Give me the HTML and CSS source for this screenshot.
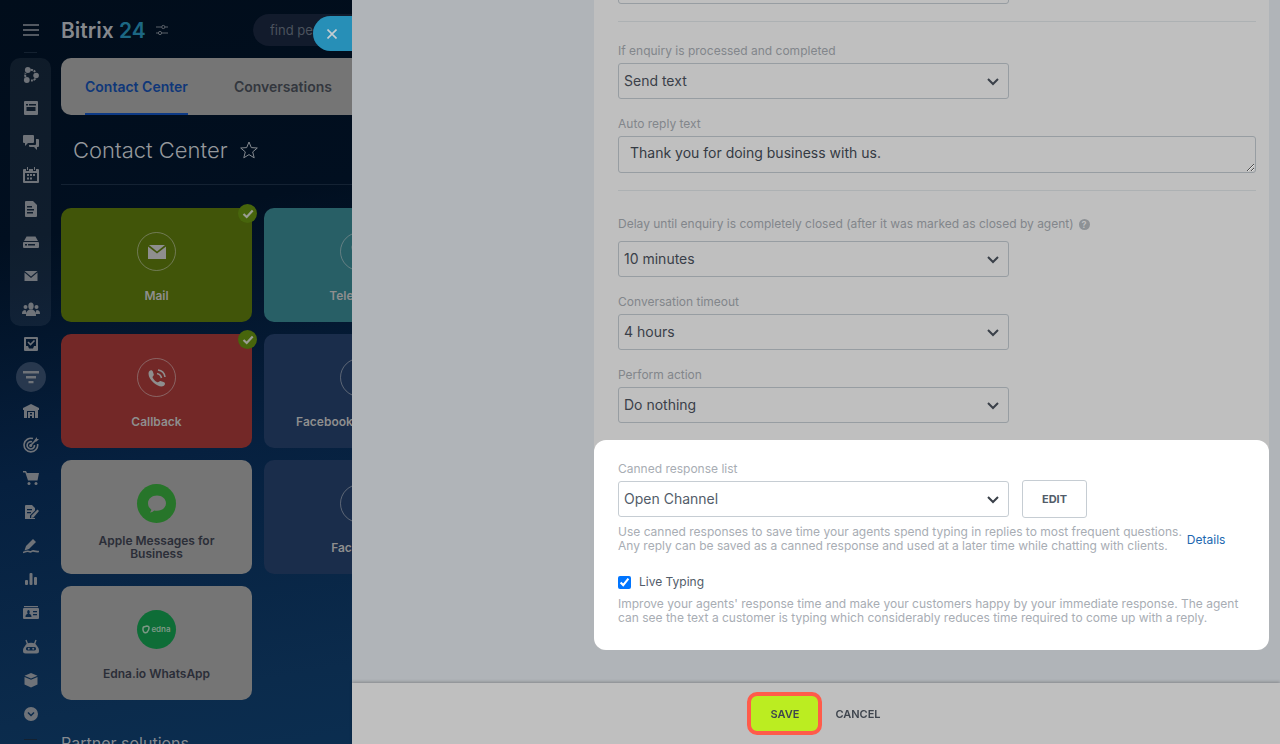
FILE: index.html
```html
<!DOCTYPE html>
<html lang="en">
<head>
    <meta charset="UTF-8">
    <meta name="viewport" content="width=device-width, initial-scale=1.0">
    <title>Contact Center</title>
    <link rel="stylesheet" href="styles.css">
</head>
<body>
    <div class="app">
        <nav class="sidebar" aria-label="Main menu">
            <button class="menu-toggle" aria-label="Menu">
                <svg width="16" height="14" viewBox="0 0 16 14"><path d="M0 2h16M0 7h16M0 12h16" stroke="currentColor" stroke-width="1.6"/></svg>
            </button>
            <div class="sidebar-line"></div>
            <div class="menu-group">
                <a href="#" aria-label="CoPilot"><svg viewBox="0 0 16 16"><path d="M7.500 2.800c2 0 3.500.600 4.700 2M12.500 11.500c-1 1.300-2.500 2-4.500 2M2.600 10c-.600-1.300-.600-2.700 0-4" fill="none" stroke="currentColor" stroke-width="2" stroke-dasharray="2.500 .800"/><circle cx="4.800" cy="3" r="2.900"/><circle cx="13.100" cy="8.500" r="2.800"/><circle cx="3.800" cy="13" r="2.900"/></svg></a>
                <a href="#" aria-label="Feed"><svg viewBox="0 0 16 16"><path fill-rule="evenodd" d="M2 1h12a1 1 0 0 1 1 1v12a1 1 0 0 1-1 1H2a1 1 0 0 1-1-1V2a1 1 0 0 1 1-1zm1 3v1.500h2V4zm3 0v1.500h7V4zM3.500 7v4h9V7z"/></svg></a>
                <a href="#" aria-label="Messenger"><svg viewBox="0 0 16 16"><path d="M1 1h9a1 1 0 0 1 1 1v6a1 1 0 0 1-1 1H5l-3 3V9H1a1 1 0 0 1-1-1V2a1 1 0 0 1 1-1z"/><path d="M13 5h2a1 1 0 0 1 1 1v6a1 1 0 0 1-1 1h-1v3l-3-3H7a1 1 0 0 1-1-1v-1h6a1 1 0 0 0 1-1z"/></svg></a>
                <a href="#" aria-label="Calendar"><svg viewBox="0 0 16 16"><path fill-rule="evenodd" d="M1 2h2v2h3V2h4v2h3V2h2a1 1 0 0 1 1 1v12a1 1 0 0 1-1 1H1a1 1 0 0 1-1-1V3a1 1 0 0 1 1-1zm1 4v8h12V6z"/><path d="M4 0h1v3H4zM11 0h1v3h-1zM4 7h2v2H4zM7 7h2v2H7zM10 7h2v2h-2zM4 10.500h2v2H4zM7 10.500h2v2H7z"/></svg></a>
                <a href="#" aria-label="Documents"><svg viewBox="0 0 16 16"><path fill-rule="evenodd" d="M3 0h7l4 4v11a1 1 0 0 1-1 1H3a1 1 0 0 1-1-1V1a1 1 0 0 1 1-1zm1 5v1.500h5V5zm0 3v1.500h7V8zm0 3v1.500h6V11z"/></svg></a>
                <a href="#" aria-label="Drive"><svg viewBox="0 0 16 16"><path d="M3.500 2.500h9L15 7H1z"/><path fill-rule="evenodd" d="M1 8h14a1 1 0 0 1 1 1v4a1 1 0 0 1-1 1H1a1 1 0 0 1-1-1V9a1 1 0 0 1 1-1zm1 2v1.500h2V10zm3 0v1.500h7V10z"/></svg></a>
                <a href="#" aria-label="Webmail"><svg viewBox="0 0 16 16"><path d="M1.500 3h13L8 8.500z"/><path d="M1.500 4.500L8 10l6.500-5.500V13h-13z"/></svg></a>
                <a href="#" aria-label="Workgroups"><svg class="wide" viewBox="0 0 18 16"><circle cx="3.500" cy="6" r="2"/><circle cx="14.500" cy="6" r="2"/><path d="M0 13c0-3 1-4 3.500-4l1.500 4zM18 13c0-3-1-4-3.500-4L13 13z"/><ellipse cx="9" cy="5" rx="2.700" ry="3.500"/><path d="M4 15c0-4 1-5.500 3.500-6.500h3C13 9.500 14 11 14 15z"/></svg></a>
            </div>
            <div class="menu-list">
                <a href="#" aria-label="Tasks"><svg viewBox="0 0 16 16"><path fill-rule="evenodd" d="M2 1h12a1 1 0 0 1 1 1v12a1 1 0 0 1-1 1H2a1 1 0 0 1-1-1V2a1 1 0 0 1 1-1zm1 2v7h2l1 2.500h4l1-2.500h2V3z"/><path d="M5 6l2.500 2.500L11.500 4.500" fill="none" stroke="currentColor" stroke-width="1.600"/></svg></a>
                <a href="#" class="active" aria-label="CRM"><svg viewBox="0 0 16 16"><path d="M0 2h16v2.500H0zM3 7h10v2.500H3zM5.500 12h5v2.200h-5z"/></svg></a>
                <a href="#" aria-label="Inventory"><svg viewBox="0 0 16 16"><path fill-rule="evenodd" d="M8 1l8 4v2h-1v8h-3V8H4v7H1V7H0V5z"/><path fill-rule="evenodd" d="M5 9h6v6H9v-2H7v2H5zm2 1v1.500h2V10z"/></svg></a>
                <a href="#" aria-label="Marketing"><svg viewBox="0 0 16 16"><g fill="none" stroke="currentColor" stroke-width="1.600"><path d="M10 1.600A6.800 6.800 0 1 0 14.600 7"/><path d="M9 4.800A3.700 3.700 0 1 0 11.500 8"/><path d="M7.500 8.500L14 2"/></g><circle cx="7.700" cy="8.500" r="1.500"/><path d="M11.500 3L14 0v2h2l-2.500 2.500h-2z"/></svg></a>
                <a href="#" aria-label="Sites and stores"><svg viewBox="0 0 16 16"><path d="M0 1h3l1 2h12l-1.500 7.500H5L2.300 2.500H0z"/><circle cx="6" cy="13.500" r="1.500"/><circle cx="13" cy="13.500" r="1.500"/></svg></a>
                <a href="#" aria-label="Contracts"><svg viewBox="0 0 16 16"><path fill-rule="evenodd" d="M3 1h6l3 3v2.500l-5 5V14h5v1H2V2a1 1 0 0 1 1-1zm1 4v1.300h5V5zm0 3v1.300h4V8z"/><path d="M14.500 5.500l1.500 1.500-5.500 6.500-2.500.500.500-2.500z"/></svg></a>
                <a href="#" aria-label="e-Signature"><svg viewBox="0 0 16 16"><path d="M10 1l3 3-7 7-4.500 1.500L3 8z"/><path d="M0 14.500c4-1 4-2 6-1s2 0 3.500-.500 2 1 6.500.500" fill="none" stroke="currentColor" stroke-width="1.600"/></svg></a>
                <a href="#" aria-label="Analytics"><svg viewBox="0 0 16 16"><rect x="2" y="9" width="3" height="5" rx="1"/><rect x="6.500" y="2" width="3" height="12" rx="1"/><rect x="11" y="6" width="3" height="8" rx="1"/></svg></a>
                <a href="#" aria-label="Employees"><svg viewBox="0 0 16 16"><path d="M1 1h14v1.200H1z"/><path fill-rule="evenodd" d="M1 3h14a1 1 0 0 1 1 1v9a1 1 0 0 1-1 1H1a1 1 0 0 1-1-1V4a1 1 0 0 1 1-1zm4.500 2C4 5 4 8 4.800 8.700 3 9.500 2.500 10 2.500 12h6c0-2-.500-2.500-2.300-3.300C7 8 7 5 5.500 5zM10 6v1.200h4V6zm0 3v1.200h4V9z"/></svg></a>
                <a href="#" aria-label="RPA"><svg viewBox="0 0 16 16"><path d="M3 1l1.500 4M13 1l-1.500 4" stroke="currentColor" stroke-width="1.400"/><path fill-rule="evenodd" d="M2 7c1-4.500 11-4.500 12 0 1.500 1.500 2 3 2 5a2.500 2.500 0 0 1-2.500 2.500h-11A2.500 2.500 0 0 1 0 12c0-2 .500-3.500 2-5zm2.500 1c-2 0-2 3.500 0 3.500h7c2 0 2-3.500 0-3.500z"/><circle cx="5.800" cy="9.700" r="1"/><circle cx="10.200" cy="9.700" r="1"/></svg></a>
                <a href="#" aria-label="Market"><svg viewBox="0 0 16 16"><path d="M8 1l6.500 2.700L8 6.500 1.500 3.700z"/><path d="M1.500 5L8 7.800 14.500 5v7.500L8 15.500l-6.500-3z"/></svg></a>
                <a href="#" aria-label="More"><svg viewBox="0 0 16 16"><path fill-rule="evenodd" d="M8 1a7 7 0 1 1 0 14A7 7 0 0 1 8 1zM5.500 6l-1 1L8 10.500 11.500 7l-1-1L8 8.500z"/></svg></a>
            </div>
            <div class="sidebar-line"></div>
        </nav>

        <main class="workspace">
            <header class="header">
                <div class="logo">Bitrix <span>24</span></div>
                <svg class="settings" width="12" height="12" viewBox="0 0 12 12"><g fill="none" stroke="currentColor"><path d="M0 3h5.500M9 3h3M0 9h2M6 9h6"/><circle cx="7.300" cy="3" r="1.600"/><circle cx="4" cy="9" r="1.600"/></g></svg>
                <input class="search" type="text" placeholder="find people, documents, and more" aria-label="Search">
            </header>

            <div class="tabs">
                <a href="#" class="tab active">Contact Center</a>
                <a href="#" class="tab">Conversations</a>
            </div>

            <div class="page-title">
                <h1>Contact Center</h1>
                <svg width="18" height="18" viewBox="0 0 18 18"><path d="M9 1l2.300 5.600 6 .400-4.600 3.900 1.500 5.900L9 13.600l-5.200 3.200 1.500-5.900L.700 7l6-.400z" fill="none" stroke="currentColor"/></svg>
            </div>

            <div class="channels">
                <a href="#" class="channel mail">
                    <span class="icon ring"><svg width="18" height="14" viewBox="0 0 18 14"><path d="M1 0h16L9 6.500z"/><path d="M0 1.500l9 7 9-7V14H0z"/></svg></span>
                    <span class="name">Mail</span>
                    <span class="badge"><svg width="12" height="10" viewBox="0 0 12 10"><path d="M1.500 5l3.200 3 6-6.500" fill="none" stroke="currentColor" stroke-width="2.200"/></svg></span>
                </a>
                <a href="#" class="channel telephony">
                    <span class="icon ring"><svg width="18" height="18" viewBox="0 0 18 18"><path d="M1 2c2-2 4-1 4 1l1 3-2 2c1 3 3 5 6 6l2-2 4 2c1 2-1 4-3 4C6 17-1 9 1 2z"/></svg></span>
                    <span class="name">Telephony</span>
                </a>
                <a href="#" class="channel callback">
                    <span class="icon ring"><svg width="18" height="18" viewBox="0 0 18 18"><path d="M1 2.500C2.500.500 4.500 1 5 3l.800 2.500c.200 1-1.500 2-1.300 2.800.800 2.200 2.800 4.200 5 5 1 .400 2-1.500 3-1.200l3 1c2 .700 2 2.500 0 4C10 19.500-2 9 1 2.500z"/><path d="M9 4.500c2.500.500 4 2 4.500 4.500M10 1c4 .500 6.500 3.500 7 7" fill="none" stroke="currentColor" stroke-width="1.600"/></svg></span>
                    <span class="name">Callback</span>
                    <span class="badge"><svg width="12" height="10" viewBox="0 0 12 10"><path d="M1.500 5l3.200 3 6-6.500" fill="none" stroke="currentColor" stroke-width="2.200"/></svg></span>
                </a>
                <a href="#" class="channel facebook">
                    <span class="icon ring"><svg width="18" height="18" viewBox="0 0 18 18"><path d="M1 0h16v18h-5v-7h3V8h-3V5h2V3H9v8H7v7H1z"/></svg></span>
                    <span class="name">Facebook Forms CRM</span>
                </a>
                <a href="#" class="channel">
                    <span class="icon apple"><svg width="20" height="20" viewBox="0 0 20 20"><path d="M10 1.500c5 0 9 3.300 9 7.700s-4 7.600-9 7.600c-.900 0-1.800-.100-2.700-.300-1.300 1.300-2.800 1.900-4.500 1.900 1-.800 1.500-1.700 1.500-2.900C2.300 14.100 1 11.900 1 9.200c0-4.400 4-7.700 9-7.700z"/></svg></span>
                    <span class="name">Apple Messages for Business</span>
                </a>
                <a href="#" class="channel facebook">
                    <span class="icon ring"></span>
                    <span class="name">Facebook</span>
                </a>
                <a href="#" class="channel">
                    <span class="icon edna"><svg width="8" height="9" viewBox="0 0 8 9"><path d="M1.500 2L5 1c2 0 2.500 1.500 1.500 4S4 8 2.500 7.500.500 3.500 1.500 2z" fill="none" stroke="currentColor" stroke-width="1.500"/></svg>edna</span>
                    <span class="name">Edna.io WhatsApp</span>
                </a>
            </div>

            <h2>Partner solutions</h2>
        </main>
    </div>

    <div class="slider">
        <button class="slider-close" aria-label="Close">
            <svg width="10" height="10" viewBox="0 0 10 10"><path d="M.500.500l9 9M9.500.500l-9 9" stroke="currentColor" stroke-width="1.600"/></svg>
        </button>

        <div class="slider-body">
            <form class="form" id="channel-form">
                <div class="section">
                    <div class="select">
                        <select aria-label="Closing option"><option></option></select>
                    </div>
                    <hr>
                    <div class="field">
                        <label for="processed">If enquiry is processed and completed</label>
                        <div class="select">
                            <select id="processed"><option>Send text</option></select>
                            <svg width="12" height="8" viewBox="0 0 12 8"><path d="M1 1l5 5 5-5"/></svg>
                        </div>
                    </div>
                    <div class="field">
                        <label for="reply">Auto reply text</label>
                        <textarea id="reply" rows="1">Thank you for doing business with us.</textarea>
                    </div>
                    <hr>
                    <div class="field">
                        <div class="label-row">
                            <label for="delay">Delay until enquiry is completely closed (after it was marked as closed by agent)</label>
                            <span class="hint">?</span>
                        </div>
                        <div class="select">
                            <select id="delay"><option>10 minutes</option></select>
                            <svg width="12" height="8" viewBox="0 0 12 8"><path d="M1 1l5 5 5-5"/></svg>
                        </div>
                    </div>
                    <div class="field">
                        <label for="timeout">Conversation timeout</label>
                        <div class="select">
                            <select id="timeout"><option>4 hours</option></select>
                            <svg width="12" height="8" viewBox="0 0 12 8"><path d="M1 1l5 5 5-5"/></svg>
                        </div>
                    </div>
                    <div class="field">
                        <label for="action">Perform action</label>
                        <div class="select">
                            <select id="action"><option>Do nothing</option></select>
                            <svg width="12" height="8" viewBox="0 0 12 8"><path d="M1 1l5 5 5-5"/></svg>
                        </div>
                    </div>
                </div>

                <div class="section highlight">
                    <label for="canned">Canned response list</label>
                    <div class="select-row">
                        <div class="select">
                            <select id="canned"><option>Open Channel</option></select>
                            <svg width="12" height="8" viewBox="0 0 12 8"><path d="M1 1l5 5 5-5"/></svg>
                        </div>
                        <button type="button" class="edit">Edit</button>
                    </div>
                    <div class="help-row">
                        <p class="help">Use canned responses to save time your agents spend typing in replies to most frequent questions.<br>Any reply can be saved as a canned response and used at a later time while chatting with clients.</p>
                        <a href="#">Details</a>
                    </div>
                    <div class="check">
                        <input type="checkbox" id="live" checked>
                        <label for="live">Live Typing</label>
                    </div>
                    <p class="help">Improve your agents' response time and make your customers happy by your immediate response. The agent<br>can see the text a customer is typing which considerably reduces time required to come up with a reply.</p>
                </div>
            </form>
        </div>

        <footer class="footer">
            <button type="submit" form="channel-form" class="save">Save</button>
            <button type="button" class="cancel">Cancel</button>
        </footer>
    </div>
</body>
</html>
```
FILE: styles.css
```css
* {
    box-sizing: border-box;
}

body {
    margin: 0;
    height: 100vh;
    overflow: hidden;
    font-family: Inter, "Liberation Sans", sans-serif;
    font-size: 12px;
    color: #3a4049;
    background: linear-gradient(170deg, #010d1b 0%, #010f20 25%, #06203f 50%, #0b2b4c 75%, #0b3257 100%);
}

a {
    text-decoration: none;
    color: inherit;
}

button,
input,
select,
textarea {
    font-family: inherit;
}

svg {
    display: block;
    fill: currentColor;
}

.app {
    display: flex;
    height: 100vh;
    overflow: hidden;
}

/* left menu */
.sidebar {
    display: flex;
    flex-direction: column;
    align-items: center;
    width: 61px;
    flex-shrink: 0;
    color: #6f7379;
}

.menu-toggle {
    height: 52px;
    padding: 8px 0 0;
    border: none;
    background: none;
    color: #6f7379;
}

.sidebar-line {
    width: 13px;
    height: 1px;
    flex-shrink: 0;
    background-color: #142130;
}

.menu-group,
.menu-list {
    display: flex;
    flex-direction: column;
    align-items: center;
    justify-content: space-around;
    flex-shrink: 0;
}

.menu-group {
    width: 41px;
    height: 268px;
    margin-top: 5px;
    border-radius: 10px;
    background-color: rgba(255, 255, 255, 0.06);
}

.menu-list {
    height: 404px;
    margin: 1px 0 8px;
}

.sidebar a svg {
    width: 16px;
    height: 16px;
}

.sidebar a .wide {
    width: 18px;
}

.menu-list .active {
    margin: -7px 0;
    padding: 7px;
    border-radius: 50%;
    background-color: #28384e;
}

/* page under the slider */
.workspace {
    width: 394px;
    flex-shrink: 0;
    color: #858a90;
}

.header {
    display: flex;
    align-items: center;
    height: 58px;
    padding-top: 2px;
}

.logo {
    font-size: 21px;
    font-weight: 600;
    color: #85888c;
}

.logo span {
    color: #1c6783;
}

.settings {
    margin: 0 auto 0 10px;
    color: #5d636b;
}

.search {
    width: 202px;
    height: 32px;
    padding: 0 17px;
    border: none;
    border-radius: 16px;
    background-color: #121b2c;
    font-size: 13px;
}

.search::placeholder {
    color: #4b525d;
}

.tabs {
    display: flex;
    gap: 46px;
    height: 57px;
    padding: 0 24px;
    border-radius: 10px;
    background-color: #757575;
    font-size: 14px;
    font-weight: 600;
    line-height: 57px;
    color: #33373e;
}

.tab.active {
    color: #0f3779;
    border-bottom: 2px solid #0d3a86;
}

.page-title {
    display: flex;
    align-items: center;
    gap: 12px;
    height: 70px;
    padding-left: 12px;
    border-bottom: 1px solid #142233;
}

h1 {
    margin: 0;
    font-size: 22px;
    font-weight: 300;
    color: #95989c;
}

.channels {
    display: grid;
    grid-template-columns: 191px 191px;
    grid-auto-rows: 114px;
    gap: 12px;
    margin: 23px 0 33px;
}

.channel {
    position: relative;
    display: flex;
    flex-direction: column;
    align-items: center;
    gap: 11px;
    padding: 24px 20px 0;
    border-radius: 10px;
    background-color: #757575;
    color: #2b2e38;
    font-weight: 600;
    line-height: 13px;
    text-align: center;
}

.mail {
    background-color: #415509;
    color: #8e8e8e;
}

.telephony {
    background-color: #285f66;
    color: #8e8e8e;
}

.callback {
    background-color: #732827;
    color: #8e8e8e;
}

.facebook {
    background-color: #1a2d4b;
    color: #8e8e8e;
}

.channel .icon {
    display: flex;
    align-items: center;
    justify-content: center;
    width: 39px;
    height: 39px;
    border-radius: 50%;
}

.channel .ring {
    border: 1px solid rgba(160, 160, 160, 0.5);
}

.channel .name {
    display: flex;
    align-items: center;
    min-height: 26px;
}

.apple {
    background-color: #27752a;
    color: #757575;
}

.edna {
    gap: 1px;
    background-color: #0e6d37;
    color: #7d9886;
    font-size: 8px;
}

.badge {
    position: absolute;
    top: -4px;
    right: -5px;
    display: flex;
    align-items: center;
    justify-content: center;
    width: 19px;
    height: 19px;
    border-radius: 50%;
    background-color: #47650c;
    color: #9a9e94;
}

h2 {
    margin: 0;
    font-size: 16px;
    font-weight: 400;
    line-height: 20px;
}

/* slider */
.slider {
    position: fixed;
    top: 0;
    right: 0;
    bottom: 0;
    left: 352px;
    display: flex;
    flex-direction: column;
    background-color: #b0b4b8;
}

.slider-close {
    position: absolute;
    top: 16px;
    right: 100%;
    display: flex;
    align-items: center;
    width: 39px;
    height: 35px;
    padding: 0 0 0 14px;
    border: none;
    border-radius: 18px 0 0 18px;
    background-color: #278fb7;
    color: #c5cdd1;
}

.slider-body {
    display: flex;
    flex: 1;
    flex-direction: column;
    justify-content: flex-end;
    min-height: 0;
    overflow: hidden;
    padding: 0 11px 33px 242px;
}

.form {
    background-color: #bfbfbf;
    border-radius: 12px;
}

.section {
    padding: 0 13px 17px 24px;
}

.field + .field {
    margin-top: 17px;
}

label {
    display: block;
    margin-bottom: 4px;
    line-height: 16px;
    color: #82868b;
}

.label-row {
    display: flex;
    align-items: center;
    gap: 5px;
    height: 24px;
    margin-bottom: 5px;
}

.label-row label {
    margin: 0;
}

.hint {
    width: 11px;
    height: 11px;
    border-radius: 50%;
    background-color: #8d9195;
    color: #bfbfbf;
    font-size: 9px;
    font-weight: 700;
    line-height: 11px;
    text-align: center;
}

.select {
    position: relative;
    width: 391px;
}

.select select {
    display: block;
    width: 100%;
    height: 36px;
    padding: 0 30px 1px 5px;
    border: 1px solid #979da2;
    border-radius: 3px;
    appearance: none;
    background: none;
    font-size: 14px;
    color: #3a4049;
}

.select svg {
    position: absolute;
    top: 15px;
    right: 10px;
    fill: none;
    stroke: #3a4049;
    stroke-width: 2;
    pointer-events: none;
}

textarea {
    display: block;
    width: 100%;
    height: 37px;
    padding: 7px 11px;
    border: 1px solid #979da2;
    border-radius: 3px;
    background: none;
    font-size: 14px;
    line-height: 18px;
    color: #343a43;
    resize: vertical;
}

hr {
    margin: 17px 0 21px;
    border: none;
    border-top: 1px solid #adb1b3;
}

.highlight {
    padding: 21px 13px 25px 24px;
    border-radius: 12px;
    background-color: #fff;
}

.highlight label,
.help {
    color: #a8adb4;
}

.highlight select {
    border-color: #c6cdd3;
    color: #525c69;
}

.select-row {
    display: flex;
    align-items: center;
    gap: 13px;
    height: 36px;
}

.edit {
    width: 65px;
    height: 38px;
    border: 1px solid #c6cdd3;
    border-radius: 3px;
    background-color: #fff;
    font-size: 11px;
    font-weight: 700;
    text-transform: uppercase;
    color: #525c69;
}

.help-row {
    display: flex;
    align-items: center;
    gap: 5px;
    margin-top: 8px;
}

.help-row a {
    color: #2067b0;
}

.help {
    margin: 0;
    line-height: 14px;
    white-space: nowrap;
}

.check {
    display: flex;
    align-items: center;
    gap: 8px;
    margin: 21px 0 7px;
}

.check input {
    width: 13px;
    height: 13px;
    margin: 0;
    accent-color: #0075ff;
}

.highlight .check label {
    margin: 0;
    color: #525c69;
}

.footer {
    display: flex;
    align-items: center;
    justify-content: center;
    gap: 9px;
    height: 61px;
    background-color: #bfbfbf;
    box-shadow: 0 -1px 3px rgba(0, 0, 0, 0.25);
}

.footer button {
    font-size: 11px;
    font-weight: 600;
    text-transform: uppercase;
    color: #3f454e;
}

.save {
    width: 75px;
    height: 43px;
    border: 4px solid #ff5b4a;
    border-radius: 10px;
    background-color: #bbed21;
}

.cancel {
    padding: 0 4px;
    border: none;
    background: none;
}
```
